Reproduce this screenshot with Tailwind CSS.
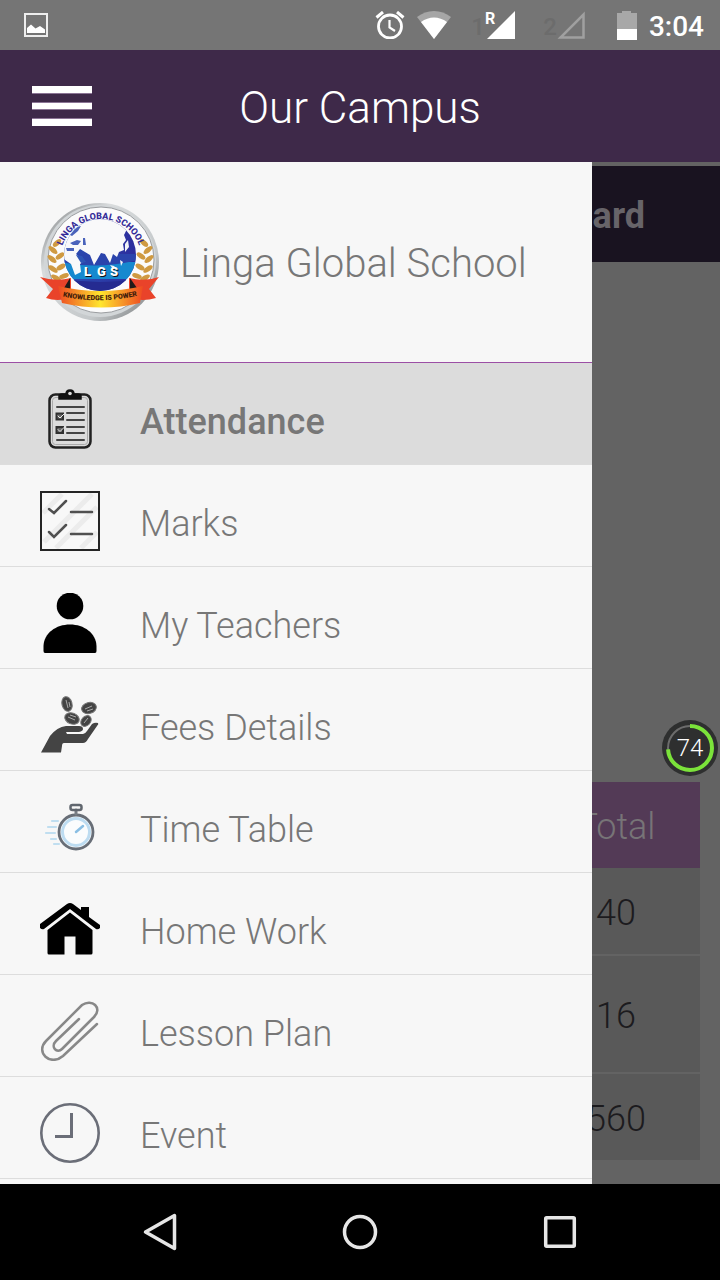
<!DOCTYPE html>
<html lang="en">
<head>
    <meta charset="UTF-8">
    <meta name="viewport" content="width=device-width, initial-scale=1.0">
    <title>Our Campus</title>
    <script src="https://cdn.jsdelivr.net/npm/@tailwindcss/browser@4"></script>
</head>
<body class="flex h-screen flex-col overflow-hidden bg-black font-['Roboto',sans-serif] font-light">
    <!-- Status bar -->
    <div class="flex h-[50px] shrink-0 items-center bg-[#757575] pl-6 pr-4 text-white">
        <svg class="size-6" viewBox="0 0 24 24" fill="none">
            <rect x="1" y="1" width="22" height="22" stroke="#eee" stroke-width="2"/>
            <path d="M3 20v-5l4-3.500 4.500 4 4.500-2.500 5 3.500v3.500z" fill="#fff"/>
        </svg>
        <svg class="ml-auto h-7 w-[30px]" viewBox="0 0 30 28" fill="none" stroke="#fff">
            <circle cx="15" cy="15.500" r="11.500" stroke-width="2.800"/>
            <path d="M14.500 9v7.500l5.500 3.500" stroke-width="2.200"/>
            <path d="M1.500 6.500L8 1M22 1l6.500 5.500" stroke-width="3"/>
        </svg>
        <svg class="ml-3 h-7 w-[34px]" viewBox="0 0 34 28">
            <path d="M0 6C10-2 24-2 34 6L17 28z" fill="#a6a6a6"/>
            <path d="M4 11c8-6 18-6 26 0L17 28z" fill="#fff"/>
        </svg>
        <span class="ml-5 pt-1 text-2xl font-medium text-[#6c6c6c]">1</span>
        <div class="flex">
            <span class="-mr-2 h-4 text-base leading-none font-bold">R</span>
            <svg class="h-7 w-[28px]" viewBox="0 0 28 28"><path d="M28 0v28H0z" fill="#fff"/></svg>
        </div>
        <span class="ml-7 pt-1 text-2xl font-medium text-[#6c6c6c]">2</span>
        <svg class="h-7 w-[28px]" viewBox="0 0 28 28"><path d="M26.500 3.500v23h-23z" fill="none" stroke="#a0a0a0" stroke-width="2.500"/></svg>
        <svg class="ml-8 h-[30px] w-5" viewBox="0 0 20 30">
            <path d="M0 3h5V1h9v2h6v17H0z" fill="#a8a8a8"/>
            <path d="M0 19h20v11H0z" fill="#fff"/>
        </svg>
        <span class="ml-3 pt-1 text-[28px] font-medium">3:04</span>
    </div>

    <!-- App header -->
    <header class="grid h-28 shrink-0 grid-cols-[60px_1fr_60px] items-center bg-[#3e2949] px-8">
        <button type="button" aria-label="Menu">
            <svg class="h-10 w-[60px]" viewBox="0 0 60 40">
                <path d="M0 6h60v2H0zM0 16h60v8H0zM0 32h60v2H0z" fill="#8b7495"/>
                <path d="M0 0h60v7H0zM0 17h60v6H0zM0 33h60v7H0z" fill="#fff"/>
            </svg>
        </button>
        <h1 class="pt-1 text-center text-[44px] text-white">Our Campus</h1>
    </header>

    <main class="relative flex-1 overflow-hidden bg-[#636363] pt-1">
        <!-- Dimmed page under the drawer -->
        <h2 class="flex h-24 items-center justify-end bg-[#191320] pt-1 pr-[75px] text-4xl font-bold text-[#676469]">ard</h2>
        <table class="mt-[520px] mr-5 ml-auto w-[168px] border-separate border-spacing-0 text-center text-4xl text-[#1c1b1e]">
            <thead>
                <tr><th class="h-[86px] bg-[#533a56] px-0 pt-1 pb-0 font-light text-[#777477]">Total</th></tr>
            </thead>
            <tbody>
                <tr><td class="h-[88px] border-b-2 border-[#636363] bg-[#595959] px-0 pt-1 pb-0">40</td></tr>
                <tr><td class="h-[118px] border-b-2 border-[#636363] bg-[#595959] px-0 pt-1 pb-0">16</td></tr>
                <tr><td class="h-[86px] bg-[#595959] px-0 pt-1 pb-0">560</td></tr>
            </tbody>
        </table>

        <!-- Drawer -->
        <aside class="absolute inset-y-0 right-32 left-0 overflow-hidden bg-[#f7f7f7] text-[#777]">
            <div class="flex h-[201px] items-center gap-5 border-b border-[#9c4fa5] pl-10">
                <svg class="size-[120px]" viewBox="0 0 120 120">
                    <defs>
                        <linearGradient id="rim" x1="0" y1="0" x2="1" y2="1">
                            <stop offset="0" stop-color="#777a7c"/>
                            <stop offset=".3" stop-color="#d9dcdd"/>
                            <stop offset=".7" stop-color="#c4c8ca"/>
                            <stop offset="1" stop-color="#6c6f71"/>
                        </linearGradient>
                        <linearGradient id="sea" x1="0" y1="0" x2="1" y2="0">
                            <stop offset="0" stop-color="#2a50b4"/>
                            <stop offset="1" stop-color="#2d2c9c"/>
                        </linearGradient>
                        <linearGradient id="band" x1="0" y1="0" x2="1" y2="0">
                            <stop offset="0" stop-color="#ee4a22"/>
                            <stop offset=".5" stop-color="#ffe62e"/>
                            <stop offset="1" stop-color="#ee4a22"/>
                        </linearGradient>
                        <clipPath id="globe"><circle cx="60" cy="53" r="36"/></clipPath>
                        <path id="arcTop" d="M21.500 46A41 41 0 0 1 100 46"/>
                        <path id="arcBottom" d="M20 94Q60 103 100 93"/>
                        <g id="laurel" fill="#cf9a42">
                            <ellipse cx="17" cy="41" rx="2.500" ry="5" transform="rotate(50 17 41)"/>
                            <ellipse cx="13" cy="48" rx="2.500" ry="5.500" transform="rotate(-50 13 48)"/>
                            <ellipse cx="20" cy="54" rx="2.500" ry="5" transform="rotate(55 20 54)"/>
                            <ellipse cx="12" cy="57" rx="2.500" ry="5.500" transform="rotate(-50 12 57)"/>
                            <ellipse cx="21" cy="65" rx="2.500" ry="5" transform="rotate(60 21 65)"/>
                            <ellipse cx="13" cy="67" rx="2.500" ry="5.500" transform="rotate(-55 13 67)"/>
                            <ellipse cx="24" cy="74" rx="2.500" ry="5" transform="rotate(70 24 74)"/>
                            <ellipse cx="16" cy="76" rx="2.500" ry="5.500" transform="rotate(-60 16 76)"/>
                        </g>
                    </defs>
                    <circle cx="60" cy="60" r="59" fill="url(#rim)"/>
                    <circle cx="60" cy="59" r="56" fill="#d2d6d8"/>
                    <circle cx="61" cy="58" r="53" fill="#fbfbfb" stroke="#9a9da0"/>
                    <use href="#laurel"/>
                    <use href="#laurel" transform="matrix(-1 0 0 1 121 0)"/>
                    <g clip-path="url(#globe)">
                        <rect x="22" y="14" width="76" height="78" fill="url(#sea)"/>
                        <path d="M20 60h78v17H20z" fill="#1689cf"/>
                        <path d="M20 60q38 8 78-2v-6H20z" fill="#2b44ac"/>
                        <path d="M20 10H80L81 23 87 27 84 33 86 38 83 42 84 48 79 50 77 55 73 52 70 61 65 52 61 51 57 58 54 63 50 53 45 50 40 47 36 52 44 59 40 62 41 70 35 73 31 62 22 56z" fill="#f9f9fa"/>
                        <path d="M28 32l8-7 5-1-3 5-6 5zM30 41l7-3 4 1-3 4-5 0zM43 36l2 0 1 7-3 0zM26 46l8 0 0 3-7 0z" fill="#4a63bb"/>
                        <path d="M36 53l5 8 5-1-4-6z" fill="#2f55b5"/>
                        <path d="M85 42l3-4 1 7-4 5zM80 58l3 2-2 4zM70 63l4 1 4 4-5-1z" fill="#f1f4f8"/>
                        <path d="M20 76q40 8 78 0v18H20z" fill="#252b91"/>
                    </g>
                    <text y="75" x="45 58 71" font-size="13" font-weight="900" fill="#111">LGS</text>
                    <text y="74" x="44 57 70" font-size="13" font-weight="900" fill="#fff">LGS</text>
                    <text font-size="9" font-weight="800" fill="#332a98"><textPath href="#arcTop" startOffset="50%" text-anchor="middle">LINGA GLOBAL SCHOOL</textPath></text>
                    <path d="M0 75q16 5 31 1v20q-14 4-25 0l7-9zM119 75q-14 5-30 1v20q14 4 27 0l-7-9z" fill="#e9432a"/>
                    <path d="M24 86l6-10v12zM97 86l-7-10v12z" fill="#211b19"/>
                    <path d="M18 84q42 10 85 0l-3 17q-38 9-78 0z" fill="url(#band)"/>
                    <text font-size="7" font-weight="900" fill="#43200b"><textPath href="#arcBottom" startOffset="50%" text-anchor="middle">KNOWLEDGE IS POWER</textPath></text>
                </svg>
                <p class="pt-1 text-[40px]">Linga Global School</p>
            </div>
            <nav class="text-4xl">
                <a href="#" class="flex h-[102px] gap-10 border-b border-[#ddd] bg-[#dcdcdc] pt-[26px] pl-10 font-medium">
                    <svg class="size-[60px]" viewBox="0 0 60 60" fill="none" stroke="#303030" stroke-linecap="round">
                        <rect x="9.500" y="5.500" width="41" height="53" rx="6" stroke="#222" stroke-width="2.500"/>
                        <rect x="12.500" y="8.500" width="35" height="47" rx="3" stroke="#aaa" stroke-width="1"/>
                        <path d="M19 10V7q0-2 3-2h4q0-4 4-4t4 4h4q3 0 3 2v3z" fill="#111" stroke="#111" stroke-width="1.500"/>
                        <circle cx="30" cy="4.500" r="1.800" fill="#dcdcdc" stroke="none"/>
                        <path d="M17 18h27M27 24h17M27 31h17M27 38h17M27 44h17M17 51h27" stroke="#444" stroke-width="2"/>
                        <path d="M16.500 24.500h6.500v6h-6.500zM16.500 38h6.500v6h-6.500z" fill="#666" stroke-width="2"/>
                        <path d="M18 27l2 2 4-4M18 40.500l2 2 4-4" stroke="#eee" stroke-width="1"/>
                    </svg>
                    <span class="leading-[66px]">Attendance</span>
                </a>
                <a href="#" class="flex h-[102px] gap-10 border-b border-[#ddd] pt-[26px] pl-10">
                    <svg class="size-[60px]" viewBox="0 0 60 60" fill="none">
                        <rect x="1" y="1" width="58" height="58" fill="#f8f8f8"/>
                        <path d="M3 22L22 3M4 51L52 3M16 57L57 16M41 57L57 41" stroke="#ececec" stroke-width="5"/>
                        <rect x="1" y="1" width="58" height="58" stroke="#252525" stroke-width="2"/>
                        <path d="M9 18l5 4 12-12M9 41l5 5 12-12M31 21h21M31 43h21" stroke="#505050" stroke-width="2.500" stroke-linecap="round"/>
                    </svg>
                    <span class="leading-[66px]">Marks</span>
                </a>
                <a href="#" class="flex h-[102px] gap-10 border-b border-[#ddd] pt-[26px] pl-10">
                    <svg class="size-[60px]" viewBox="0 0 60 60">
                        <circle cx="30" cy="13" r="13.300"/>
                        <path d="M5 60q-1.500 0-1.500-2V53C4 40 16 31.500 30 31.500S56 40 56.500 53v5q0 2-1.500 2z"/>
                    </svg>
                    <span class="leading-[66px]">My Teachers</span>
                </a>
                <a href="#" class="flex h-[102px] gap-10 border-b border-[#ddd] pt-[26px] pl-10">
                    <svg class="size-[60px]" viewBox="0 0 60 60" fill="#444">
                        <path d="M1 57.500L10 41Q17 32 26 31h13q4 0 4 3 0 2-4 3H26l1 2h16q2 0 4-3l5-7q3-2 6-1 1 1-1 3l-9 13q-2 4-5 4H24q-2 0-2 3l-1 6.500z"/>
                        <g stroke="#777" stroke-width="1">
                            <ellipse cx="27" cy="9" rx="5" ry="7.500" transform="rotate(-15 27 9)"/>
                            <ellipse cx="49" cy="13" rx="7.500" ry="5.500" transform="rotate(-15 49 13)"/>
                            <ellipse cx="32" cy="23.500" rx="7.500" ry="5.500" transform="rotate(22 32 23.500)"/>
                            <ellipse cx="46" cy="26" rx="6" ry="4.500" transform="rotate(-48 46 26)"/>
                        </g>
                        <g fill="none" stroke="#aaa" stroke-width="1">
                            <path d="M26 5l2 8M29 7l1 5M45 14l7-3M47 16l6-2M28 22l7 3M30 20l6 2M44 28l4-5"/>
                        </g>
                    </svg>
                    <span class="leading-[66px]">Fees Details</span>
                </a>
                <a href="#" class="flex h-[102px] gap-10 border-b border-[#ddd] pt-[26px] pl-10">
                    <svg class="size-[60px]" viewBox="0 0 60 60" fill="none" stroke-linecap="round">
                        <path d="M8 30h8M6 36h9M12 24h6M11 42h5M14 47h5" stroke="#c0def0" stroke-width="2.200"/>
                        <circle cx="36" cy="35" r="17" fill="#fafcfd" stroke="#686e77" stroke-width="2.800"/>
                        <circle cx="36" cy="35" r="13.500" stroke="#bddcf1" stroke-width="3"/>
                        <path d="M36 35l7-6" stroke="#8abfe4" stroke-width="2.500"/>
                        <path d="M36 13v4" stroke="#777d84" stroke-width="3"/>
                        <rect x="30.500" y="8" width="11" height="5" rx="2" stroke="#60666e" stroke-width="2.500"/>
                    </svg>
                    <span class="leading-[66px]">Time Table</span>
                </a>
                <a href="#" class="flex h-[102px] gap-10 border-b border-[#ddd] pt-[26px] pl-10">
                    <svg class="size-[60px]" viewBox="0 0 60 60">
                        <path d="M0 25L27 5q3-2 6 0l8 6V8h8V18l11 8v3q-2 2-4 1L30 10 4 30q-2 1-4-1z"/>
                        <path d="M7.500 31L30 13.500 52.500 31v23q0 1.500-1.500 1.500H35.500V37.500h-11v18H9q-1.500 0-1.500-1.500z"/>
                    </svg>
                    <span class="leading-[66px]">Home Work</span>
                </a>
                <a href="#" class="flex h-[102px] gap-10 border-b border-[#ddd] pt-[26px] pl-10">
                    <svg class="size-[60px]" viewBox="0 0 60 60" fill="none" stroke="#888" stroke-width="2.500" stroke-linecap="round">
                        <path d="M39 18L16 40C10 46 17 53 22 48L54 16C63 7 52-3 42 4L6 40C-5 51 10 66 23 55L57 23"/>
                    </svg>
                    <span class="leading-[66px]">Lesson Plan</span>
                </a>
                <a href="#" class="flex h-[102px] gap-10 border-b border-[#ddd] pt-[26px] pl-10">
                    <svg class="size-[60px]" viewBox="0 0 60 60" fill="none" stroke="#6b6e78">
                        <circle cx="30" cy="30" r="28.700" stroke-width="2.600"/>
                        <path d="M31.500 10v23.500H15" stroke-width="3"/>
                    </svg>
                    <span class="leading-[66px]">Event</span>
                </a>
            </nav>
        </aside>

        <!-- Floating level badge -->
        <div class="absolute top-[558px] right-0.5 grid size-14 place-items-center rounded-full bg-[#2e2f2f] text-2xl text-white">
            <svg class="absolute inset-0 size-14 -rotate-90" viewBox="0 0 56 56" fill="none">
                <circle cx="28" cy="28" r="22" stroke="#6c6c6c" stroke-width="2"/>
                <circle cx="28" cy="28" r="22" stroke="#7be33a" stroke-width="4" pathLength="100" stroke-dasharray="74 26"/>
            </svg>
            <span class="relative">74</span>
        </div>
    </main>

    <!-- System navigation -->
    <footer class="flex h-24 shrink-0 items-center justify-center gap-40">
        <button type="button" aria-label="Back">
            <svg class="size-10" viewBox="0 0 40 40" fill="none"><path d="M34.500 3.500v33L5.500 20z" stroke="#e6e6e6" stroke-width="3.500" stroke-linejoin="round"/></svg>
        </button>
        <button type="button" aria-label="Home">
            <svg class="size-10" viewBox="0 0 40 40" fill="none"><circle cx="20" cy="20" r="15.500" stroke="#e6e6e6" stroke-width="3.500"/></svg>
        </button>
        <button type="button" aria-label="Recent apps">
            <svg class="size-10" viewBox="0 0 40 40" fill="none"><rect x="5.700" y="5.700" width="28.600" height="28.600" rx="1" stroke="#e6e6e6" stroke-width="3.500"/></svg>
        </button>
    </footer>
</body>
</html>
